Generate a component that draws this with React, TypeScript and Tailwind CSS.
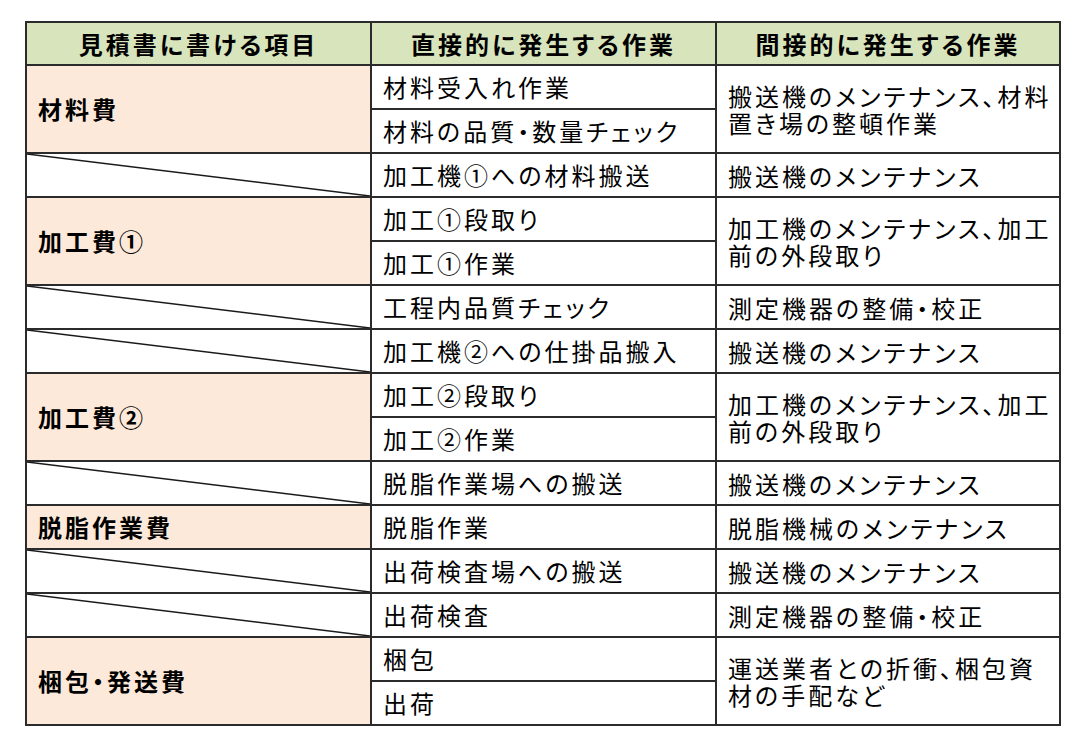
import React from 'react';

type Row = {
  item?: { label: string; span: number } | 'diag';
  direct: string;
  indirect?: { text: React.ReactNode; span: number };
};

const rows: Row[] = [
  { item: { label: '材料費', span: 2 }, direct: '材料受入れ作業', indirect: { text: <>搬送機のメンテナンス、材料<br />置き場の整頓作業</>, span: 2 } },
  { direct: '材料の品質・数量チェック' },
  { item: 'diag', direct: '加工機①への材料搬送', indirect: { text: '搬送機のメンテナンス', span: 1 } },
  { item: { label: '加工費①', span: 2 }, direct: '加工①段取り', indirect: { text: <>加工機のメンテナンス、加工<br />前の外段取り</>, span: 2 } },
  { direct: '加工①作業' },
  { item: 'diag', direct: '工程内品質チェック', indirect: { text: '測定機器の整備・校正', span: 1 } },
  { item: 'diag', direct: '加工機②への仕掛品搬入', indirect: { text: '搬送機のメンテナンス', span: 1 } },
  { item: { label: '加工費②', span: 2 }, direct: '加工②段取り', indirect: { text: <>加工機のメンテナンス、加工<br />前の外段取り</>, span: 2 } },
  { direct: '加工②作業' },
  { item: 'diag', direct: '脱脂作業場への搬送', indirect: { text: '搬送機のメンテナンス', span: 1 } },
  { item: { label: '脱脂作業費', span: 1 }, direct: '脱脂作業', indirect: { text: '脱脂機械のメンテナンス', span: 1 } },
  { item: 'diag', direct: '出荷検査場への搬送', indirect: { text: '搬送機のメンテナンス', span: 1 } },
  { item: 'diag', direct: '出荷検査', indirect: { text: '測定機器の整備・校正', span: 1 } },
  { item: { label: '梱包・発送費', span: 2 }, direct: '梱包', indirect: { text: <>運送業者との折衝、梱包資<br />材の手配など</>, span: 2 } },
  { direct: '出荷' },
];

const cell = 'border-2 border-[#2b2b2b] px-[11px] align-middle whitespace-nowrap';

export default function App() {
  return (
    <div className="min-h-screen bg-white pt-[21px] pl-[25px] font-['Noto_Sans_CJK_JP','Noto_Sans',sans-serif] text-[24px] leading-[28px] tracking-[3px] text-black [font-feature-settings:'palt']">
      <table className="w-[1034px] table-fixed border-collapse">
        <colgroup>
          <col className="w-[345px]" />
          <col className="w-[345px]" />
          <col className="w-[344px]" />
        </colgroup>
        <thead>
          <tr className="h-[43px] bg-[#d8e4bc]">
            <th className={`${cell} text-center font-bold`}>見積書に書ける項目</th>
            <th className={`${cell} text-center font-bold`}>直接的に発生する作業</th>
            <th className={`${cell} text-center font-bold`}>間接的に発生する作業</th>
          </tr>
        </thead>
        <tbody>
          {rows.map((r, i) => (
            <tr key={i} className="h-[44px]">
              {r.item === 'diag' ? (
                <td className={`${cell} relative p-0`}>
                  <svg className="absolute inset-0 h-full w-full" preserveAspectRatio="none" viewBox="0 0 100 100">
                    <line x1="0" y1="0" x2="100" y2="100" stroke="#1a1a1a" strokeWidth="1.5" vectorEffect="non-scaling-stroke" />
                  </svg>
                </td>
              ) : r.item ? (
                <td rowSpan={r.item.span} className={`${cell} bg-[#fde9d9] font-bold`}>
                  {r.item.label}
                </td>
              ) : null}
              <td className={`${cell} bg-white`}>{r.direct}</td>
              {r.indirect && (
                <td rowSpan={r.indirect.span} className={`${cell} bg-white leading-[27px]`}>
                  {r.indirect.text}
                </td>
              )}
            </tr>
          ))}
        </tbody>
      </table>
    </div>
  );
}
